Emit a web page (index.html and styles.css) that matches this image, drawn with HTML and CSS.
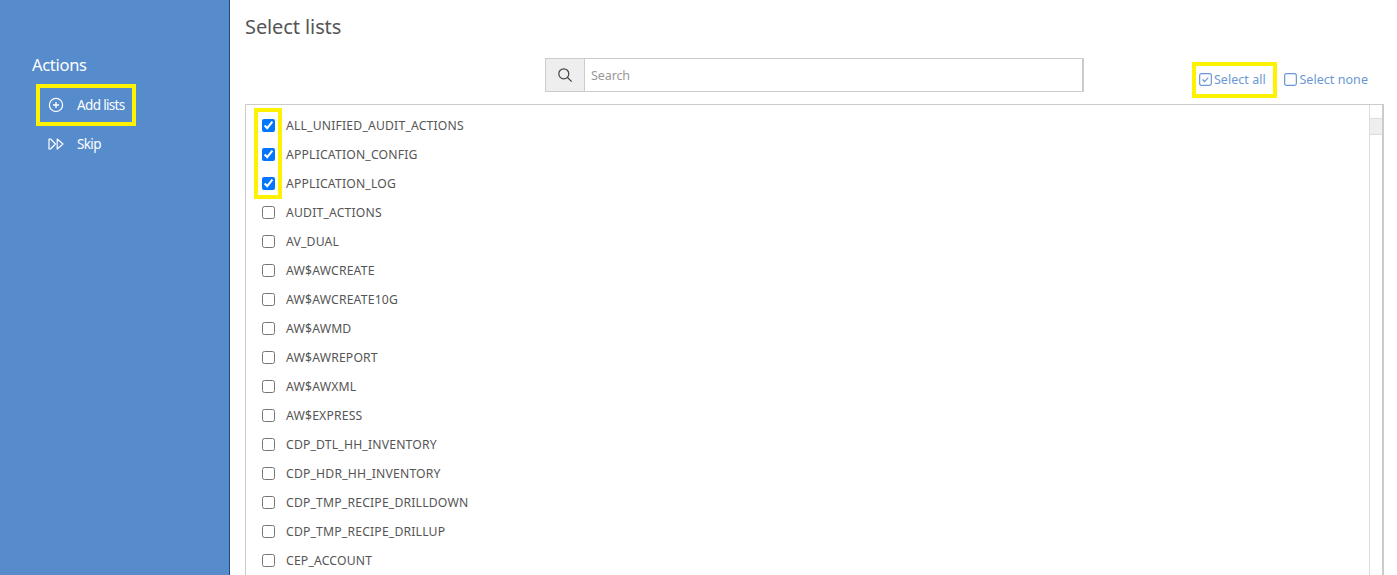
FILE: index.html
```html
<!DOCTYPE html>
<html lang="en">
<head>
<meta charset="utf-8">
<title>Select lists</title>
<link rel="stylesheet" href="styles.css">
</head>
<body>
<div class="app">
  <aside class="sidebar">
    <h2 class="side-title">Actions</h2>
    <a class="side-item side-item-marked">
      <svg class="side-icon" viewBox="0 0 16 16" fill="none" stroke="currentColor" stroke-width="1.2"><circle cx="8" cy="8" r="6.6"/><path d="M8 5v6M5 8h6" stroke-width="1.4"/></svg>
      <span>Add lists</span>
    </a>
    <a class="side-item">
      <svg class="side-icon" viewBox="0 0 16 16" fill="none" stroke="currentColor" stroke-width="1.2" stroke-linejoin="round"><path d="M1 3h1.6L7.4 8l-4.8 5H1z"/><path d="M9.2 3l5.8 5-5.8 5z"/></svg>
      <span>Skip</span>
    </a>
  </aside>
  <main class="content">
    <h1 class="page-title">Select lists</h1>
    <div class="toolbar">
      <div class="search">
        <span class="search-addon">
          <svg viewBox="0 0 16 16" width="16" height="16" fill="none" stroke="#444" stroke-width="1.2"><circle cx="6.8" cy="6.8" r="5"/><path d="M10.5 10.5l4.2 4.2"/></svg>
        </span>
        <input class="search-input" type="text" placeholder="Search">
      </div>
      <div class="select-links">
        <a class="select-link select-link-marked">
          <svg viewBox="0 0 14 14" width="13" height="13" fill="none" stroke="currentColor" stroke-width="1.3"><rect x="0.7" y="0.7" width="12.6" height="12.6" rx="2"/><path d="M3.8 7l2.2 2.2 4-4.2"/></svg>Select all
        </a>
        <a class="select-link">
          <svg viewBox="0 0 14 14" width="13" height="13" fill="none" stroke="currentColor" stroke-width="1.3"><rect x="0.7" y="0.7" width="12.6" height="12.6" rx="2"/></svg>Select none
        </a>
      </div>
    </div>
    <div class="list-panel">
      <div class="check-mark"></div>
      <ul class="list">
        <li><input type="checkbox" checked><span>ALL_UNIFIED_AUDIT_ACTIONS</span></li>
        <li><input type="checkbox" checked><span>APPLICATION_CONFIG</span></li>
        <li><input type="checkbox" checked><span>APPLICATION_LOG</span></li>
        <li><input type="checkbox"><span>AUDIT_ACTIONS</span></li>
        <li><input type="checkbox"><span>AV_DUAL</span></li>
        <li><input type="checkbox"><span>AW$AWCREATE</span></li>
        <li><input type="checkbox"><span>AW$AWCREATE10G</span></li>
        <li><input type="checkbox"><span>AW$AWMD</span></li>
        <li><input type="checkbox"><span>AW$AWREPORT</span></li>
        <li><input type="checkbox"><span>AW$AWXML</span></li>
        <li><input type="checkbox"><span>AW$EXPRESS</span></li>
        <li><input type="checkbox"><span>CDP_DTL_HH_INVENTORY</span></li>
        <li><input type="checkbox"><span>CDP_HDR_HH_INVENTORY</span></li>
        <li><input type="checkbox"><span>CDP_TMP_RECIPE_DRILLDOWN</span></li>
        <li><input type="checkbox"><span>CDP_TMP_RECIPE_DRILLUP</span></li>
        <li><input type="checkbox"><span>CEP_ACCOUNT</span></li>
      </ul>
      <div class="scrollbar">
        <div class="scroll-up"></div>
        <div class="scroll-thumb"></div>
      </div>
    </div>
  </main>
</div>
</body>
</html>
```
FILE: styles.css
```css
* { box-sizing: border-box; }
html, body { margin: 0; height: 100%; overflow: hidden; background: #fff; }
body { font-family: "Noto Sans", "Open Sans", sans-serif; color: #444; }
.app { display: flex; height: 575px; }
.sidebar {
  width: 230px;
  flex: none;
  background: #568bcc;
  border-right: 1px solid #1f4a7d;
  color: #fff;
  padding: 54px 0 0 32px;
}
.side-title { margin: 0 0 8px; font-size: 16.5px; line-height: 22px; font-weight: 400; letter-spacing: -0.3px; }
.side-item {
  display: flex;
  align-items: center;
  height: 42px;
  width: 100px;
  margin-left: 4px;
  padding-left: 12px;
  gap: 13px;
  border: 4.5px solid transparent;
  font-size: 13.5px;
  letter-spacing: -0.65px;
}
.side-item-marked { border-color: #fff200; }
.side-item + .side-item { margin-top: -3px; }
.side-icon { width: 16px; height: 16px; flex: none; margin-left: -4px; }
.content { flex: 1; min-width: 0; padding: 0 13px 0 15px; }
.page-title { margin: 0; padding-top: 14px; font-size: 20px; line-height: 26px; font-weight: 400; letter-spacing: -0.1px; color: #555; height: 58px; }
.toolbar { position: relative; height: 46px; display: flex; justify-content: flex-start; }
.search { display: flex; width: 539px; height: 34px; margin-left: 300px; border: 1px solid #ccc; border-right-width: 2px; }
.search-addon { width: 39px; flex: none; display: flex; align-items: center; justify-content: center; background: #eee; border-right: 1px solid #ccc; }
.search-input { flex: 1; min-width: 0; border: 0; outline: 0; padding: 0 6px; font: 12.5px "Noto Sans", sans-serif; letter-spacing: -0.1px; color: #444; }
.search-input::placeholder { color: #999; opacity: 1; }
.select-links { display: flex; margin-left: auto; align-items: center; height: 36px; margin-top: 4px; gap: 7px; padding-right: 16px; }
.select-link { display: flex; align-items: center; gap: 2px; height: 36px; padding: 0 6.5px 2px 2.5px; font-size: 12.5px; letter-spacing: 0.05px; color: #6a97d4; border: 4.5px solid transparent; white-space: nowrap; }
.select-link + .select-link { padding: 0 0 2px; border: 0; }
.select-link-marked { border-color: #fff200; width: 85px; }
.list-panel { position: relative; display: flex; height: 480px; border: 1px solid #ccc; border-right-width: 2px; overflow: hidden; }
.check-mark { position: absolute; left: 8px; top: 3px; width: 28px; height: 91px; border: 4.5px solid #fff200; }
.list { flex: 1; list-style: none; margin: 0; padding: 6px 0 0 16px; font-size: 12.2px; letter-spacing: 0.18px; color: #555; }
.list li { display: flex; align-items: center; height: 29px; }
.list input { width: 13px; height: 13px; margin: 0 11px 0 0; flex: none; }
.scrollbar { width: 13px; flex: none; border-left: 1px solid #ddd; }
.scroll-up { height: 14px; border-bottom: 1px solid #ddd; }
.scroll-thumb { height: 16px; background: #eee; border-bottom: 1px solid #ddd; }
```
